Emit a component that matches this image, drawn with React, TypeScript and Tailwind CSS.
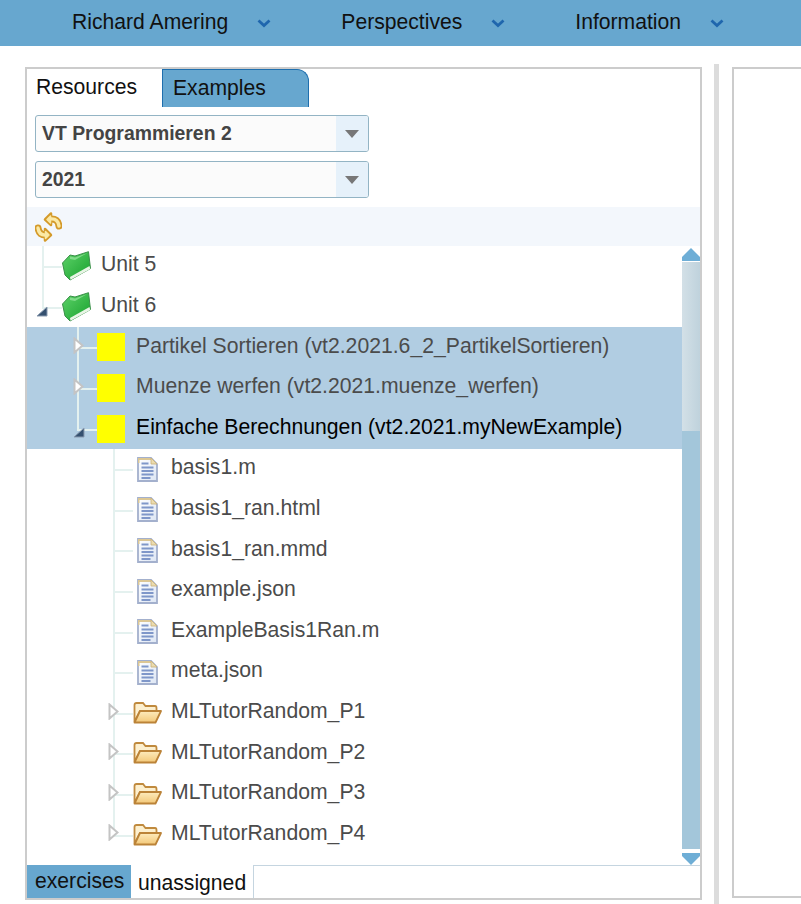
import React from 'react'

const FONT = "font-['Liberation_Sans',Arial,sans-serif]"

const Chevron = () => (
  <svg width="14" height="9" viewBox="0 0 14 9" className="mt-1 shrink-0">
    <path d="M1.5 1.5 L7 6.5 L12.5 1.5" fill="none" stroke="#1f66ad" strokeWidth="2.8" />
  </svg>
)

const MenuItem = ({ label }: { label: string }) => (
  <div className="flex items-center gap-[29px] text-[21.15px] text-[#111]">
    <span>{label}</span>
    <Chevron />
  </div>
)

const Select = ({ value }: { value: string }) => (
  <div className="flex h-[37px] w-[334px] overflow-hidden rounded-[3px] border border-[#93b4c4] bg-[#fbfbfb]">
    <div className="flex-1 pl-[6px] text-[19.4px] leading-[35px] font-bold text-[#444]">{value}</div>
    <div className="flex w-[32px] items-center justify-center bg-[#e6f1fa]">
      <svg width="14" height="8" viewBox="0 0 14 8">
        <path d="M0 0 H14 L7 8 Z" fill="#777" />
      </svg>
    </div>
  </div>
)

const RefreshIcon = () => (
  <svg width="27" height="30" viewBox="0 0 27 30">
    <g fill="none" strokeLinecap="round" strokeLinejoin="round">
      <path d="M10 7.5 L16 1.5 L16 13 Z" fill="#d49a2a" stroke="#d49a2a" strokeWidth="2.5" />
      <path d="M15 7 Q23 6 24 14" stroke="#d49a2a" strokeWidth="7" />
      <path d="M12 7.5 L15.5 4 L15.5 11 Z" fill="#fbe9a5" stroke="#fbe9a5" strokeWidth="1.5" />
      <path d="M15 7 Q23 6 24 14" stroke="#fbe9a5" strokeWidth="3.4" />
      <path d="M16 23 L10 17 L10 28.5 Z" fill="#d49a2a" stroke="#d49a2a" strokeWidth="2.5" />
      <path d="M12 23 Q4 24 3 16" stroke="#d49a2a" strokeWidth="7" />
      <path d="M14 23 L10.5 19.5 L10.5 26.5 Z" fill="#fbe9a5" stroke="#fbe9a5" strokeWidth="1.5" />
      <path d="M12 23 Q4 24 3 16" stroke="#fbe9a5" strokeWidth="3.4" />
    </g>
  </svg>
)

const GreenFolder = () => (
  <svg width="29" height="30" viewBox="0 0 29 30" className="shrink-0">
    <defs>
      <linearGradient id="greenFill" x1="0" y1="0" x2="1" y2="1">
        <stop offset="0" stopColor="#5fd36a" />
        <stop offset="1" stopColor="#16a02c" />
      </linearGradient>
    </defs>
    <path d="M0.5 12 L8 4 L13 5 L26.5 0.7 L28.5 17.5 L8 29 L3 24 Z" fill="url(#greenFill)" stroke="#3a8f48" strokeWidth="1" strokeLinejoin="round" />
    <path d="M8 26 L27.5 15 L28.3 18 L8.5 28.7 Z" fill="#e9f5e6" />
    <path d="M8 5.5 L13 6.5 L25.5 2 L20 5 L13 9 L8 8 Z" fill="#9ae5a0" opacity="0.7" />
  </svg>
)

const FileIcon = () => (
  <svg width="21" height="25" viewBox="0 0 21 25" className="shrink-0">
    <defs>
      <linearGradient id="pageFill" x1="0" y1="0" x2="1" y2="1">
        <stop offset="0" stopColor="#ffffff" />
        <stop offset="1" stopColor="#dde6f4" />
      </linearGradient>
    </defs>
    <path d="M1 1 H14 L20 7 V24 H1 Z" fill="url(#pageFill)" stroke="#a3b0cd" strokeWidth="1.8" />
    <path d="M1 1 H14 L20 7 H15 L14 3 H2.5 V6 H1 Z" fill="#dcc795" />
    <path d="M14 1 V7 H20 Z" fill="#ecdcae" stroke="#c9b07a" strokeWidth="0.8" />
    <path d="M4.5 6.5 H11.5 M4.5 10.5 H16.5 M4.5 14 H16.5 M4.5 17.5 H16.5 M4.5 21 H13.5" stroke="#7f97c9" strokeWidth="1.8" />
  </svg>
)

const OpenFolder = () => (
  <svg width="29" height="22" viewBox="0 0 29 22" className="shrink-0">
    <defs>
      <linearGradient id="folderFill" x1="0" y1="0" x2="0" y2="1">
        <stop offset="0" stopColor="#fdebbd" />
        <stop offset="1" stopColor="#f3c878" />
      </linearGradient>
    </defs>
    <path d="M1.5 20 V3 Q1.5 1 3.5 1 H10 L12.5 4 H22 Q23.5 4 23.5 6 V9 H7 Z" fill="#fdf0cf" stroke="#c08a3e" strokeWidth="1.8" />
    <path d="M1.5 20.5 L7 9 H28 L22.5 20.5 Z" fill="url(#folderFill)" stroke="#bb8338" strokeWidth="1.8" strokeLinejoin="round" />
  </svg>
)

const Collapsed = () => (
  <svg width="11" height="17" viewBox="0 0 11 17">
    <path d="M1.5 1.5 L9.5 8.5 L1.5 15.5 Z" fill="#fff" stroke="#c4c4c4" strokeWidth="2" />
  </svg>
)

const Expanded = () => (
  <svg width="12" height="11" viewBox="0 0 12 11">
    <path d="M11 1 V10 H1 Z" fill="#34506f" stroke="#8a9bb0" strokeWidth="1" />
  </svg>
)

type RowProps = {
  level: 1 | 2 | 3
  label: string
  icon: React.ReactNode
  toggle?: 'open' | 'closed'
  last?: boolean
  selected?: boolean
  dark?: boolean
}

const levelStyles = {
  1: { pad: 'pl-[35px]', line: 'left-[15px]', stub: 'left-[15px] w-[20px]', toggle: 'left-[9px]', text: 'ml-[10px]' },
  2: { pad: 'pl-[70px]', line: 'left-[50px]', stub: 'left-[50px] w-[20px]', toggle: 'left-[46px]', text: 'ml-[11px]' },
  3: { pad: 'pl-[106px]', line: 'left-[86px]', stub: 'left-[86px] w-[20px]', toggle: 'left-[81px]', text: 'ml-[9px]' },
}

const TreeRow = ({ level, label, icon, toggle, last, selected, dark }: RowProps) => {
  const s = levelStyles[level]
  const isFile = level === 3 && !toggle
  return (
    <div className={`relative flex h-[40.6px] items-center ${s.pad} ${selected ? 'bg-[#b1cde2]' : ''}`}>
      {/* connectors */}
      <span className={`absolute top-0 w-[2px] bg-[#e4f1ef] ${s.line} ${last ? 'h-1/2' : 'h-full'}`} />
      <span className={`absolute top-1/2 h-[2px] bg-[#e4f1ef] ${s.stub}`} />
      {toggle === 'closed' && (
        <span className={`absolute top-[10px] ${s.toggle}`}>
          <Collapsed />
        </span>
      )}
      {toggle === 'open' && (
        <span className={`absolute top-[19px] ${s.toggle}`}>
          <Expanded />
        </span>
      )}
      <span className={`flex ${isFile ? 'ml-[4px]' : ''}`}>{icon}</span>
      <span
        className={`${isFile ? 'ml-[13px]' : s.text} mb-[4px] whitespace-nowrap text-[21.2px] ${dark ? 'text-black' : 'text-[#4b4b4b]'}`}
      >
        {label}
      </span>
    </div>
  )
}

const Yellow = () => <div className="h-[28px] w-[28px] bg-[#ffff00]" />

const files = ['basis1.m', 'basis1_ran.html', 'basis1_ran.mmd', 'example.json', 'ExampleBasis1Ran.m', 'meta.json']
const folders = ['MLTutorRandom_P1', 'MLTutorRandom_P2', 'MLTutorRandom_P3', 'MLTutorRandom_P4']

export default function App() {
  return (
    <div className={`flex h-[904px] w-[801px] flex-col overflow-hidden bg-white ${FONT}`}>
      {/* Top bar */}
      <div className="flex h-[46px] shrink-0 items-center gap-[70px] bg-[#67a7cf] pb-[2px] pl-[72px]">
        <MenuItem label="Richard Amering" />
        <MenuItem label="Perspectives" />
        <MenuItem label="Information" />
      </div>

      <div className="flex min-h-0 flex-1">
        {/* Left panel */}
        <div className="mt-[21px] mb-[4px] ml-[25px] flex w-[677px] shrink-0 flex-col border-2 border-[#cccccc]">
          {/* Tabs */}
          <div className="flex h-[38px] shrink-0 text-[21.15px] text-[#111]">
            <div className="w-[135px] pl-[9px] leading-[36px]">Resources</div>
            <div className="w-[147px] rounded-tr-[12px] border border-b-0 border-[#1f6fae] bg-[#67a7cf] pl-[10px] leading-[36px]">
              Examples
            </div>
          </div>

          <div className="flex shrink-0 flex-col gap-[9px] pt-[8px] pl-[8px]">
            <Select value="VT Programmieren 2" />
            <Select value="2021" />
          </div>

          {/* Toolbar */}
          <div className="mt-[9px] flex h-[39px] shrink-0 items-center bg-[#f3f7fc] pl-[8px]">
            <RefreshIcon />
          </div>

          {/* Tree with scrollbar */}
          <div className="flex min-h-0 flex-1">
            <div className="min-w-0 flex-1 overflow-hidden">
              <TreeRow level={1} label="Unit 5" icon={<GreenFolder />} />
              <TreeRow level={1} label="Unit 6" icon={<GreenFolder />} toggle="open" last />
              <TreeRow level={2} label="Partikel Sortieren (vt2.2021.6_2_PartikelSortieren)" icon={<Yellow />} toggle="closed" selected />
              <TreeRow level={2} label="Muenze werfen (vt2.2021.muenze_werfen)" icon={<Yellow />} toggle="closed" selected />
              <TreeRow level={2} label="Einfache Berechnungen (vt2.2021.myNewExample)" icon={<Yellow />} toggle="open" selected dark last />
              {files.map((f) => (
                <TreeRow key={f} level={3} label={f} icon={<FileIcon />} />
              ))}
              {folders.map((f, i) => (
                <TreeRow key={f} level={3} label={f} icon={<OpenFolder />} toggle="closed" last={i === folders.length - 1} />
              ))}
            </div>

            {/* Scrollbar */}
            <div className="flex w-[18px] shrink-0 flex-col">
              <div className="flex h-[16px] items-end bg-white">
                <svg width="18" height="15" viewBox="0 0 18 15">
                  <path d="M0 10 L9 1 L18 10 V14 H0 Z" fill="#6eaed6" />
                </svg>
              </div>
              <div className="h-[169px] bg-gradient-to-r from-[#d3e0e7] to-[#bfd2dc]" />
              <div className="flex-1 bg-[#a3c6da]" />
              <div className="h-[16px] bg-white">
                <svg width="18" height="16" viewBox="0 0 18 16">
                  <path d="M0 4 H18 V7 L9 16 L0 7 Z" fill="#6eaed6" />
                </svg>
              </div>
            </div>
          </div>

          {/* Bottom tabs */}
          <div className="flex h-[33px] shrink-0 text-[21.15px] text-[#111]">
            <div className="w-[104px] bg-[#67a7cf] pl-[8px] leading-[31px]">exercises</div>
            <div className="w-[122px] pl-[7px] leading-[36px]">unassigned</div>
            <div className="flex-1 border-t border-l border-[#c5d5e0]" />
          </div>
        </div>

        {/* Divider */}
        <div className="mt-[18px] ml-[12px] w-[5px] shrink-0 bg-[#dcdcdc]" />

        {/* Right panel */}
        <div className="mt-[21px] mb-[6px] ml-[13px] w-[90px] shrink-0 border-2 border-[#cccccc]" />
      </div>
    </div>
  )
}
